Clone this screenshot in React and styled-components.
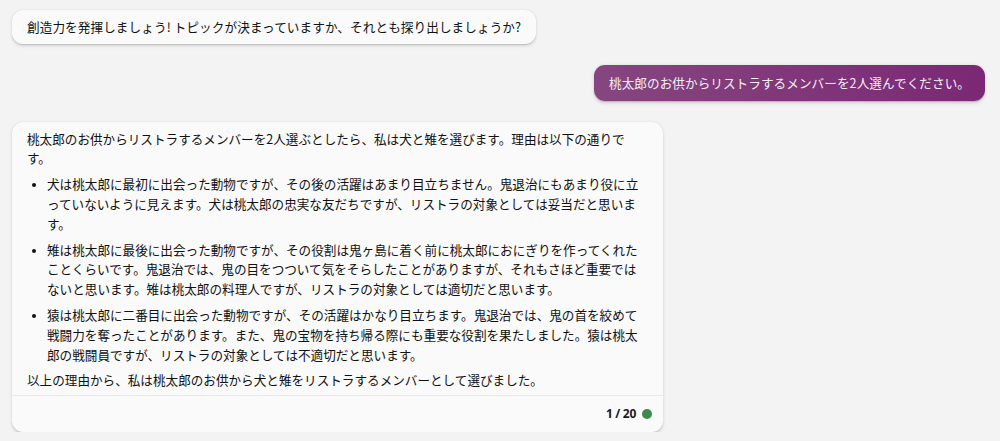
import React from 'react';
import styled, { createGlobalStyle } from 'styled-components';

const GlobalStyle = createGlobalStyle`
  html, body {
    margin: 0;
    padding: 0;
    background: #f3f3f3;
  }
  body {
    font-family: 'Noto Sans CJK JP', 'Noto Sans', sans-serif;
    color: #111;
  }
`;

const bullets = [
  '犬は桃太郎に最初に出会った動物ですが、その後の活躍はあまり目立ちません。鬼退治にもあまり役に立っていないように見えます。犬は桃太郎の忠実な友だちですが、リストラの対象としては妥当だと思います。',
  '雉は桃太郎に最後に出会った動物ですが、その役割は鬼ヶ島に着く前に桃太郎におにぎりを作ってくれたことくらいです。鬼退治では、鬼の目をつついて気をそらしたことがありますが、それもさほど重要ではないと思います。雉は桃太郎の料理人ですが、リストラの対象としては適切だと思います。',
  '猿は桃太郎に二番目に出会った動物ですが、その活躍はかなり目立ちます。鬼退治では、鬼の首を絞めて戦闘力を奪ったことがあります。また、鬼の宝物を持ち帰る際にも重要な役割を果たしました。猿は桃太郎の戦闘員ですが、リストラの対象としては不適切だと思います。',
];

const App = () => {
  return (
    <>
      <GlobalStyle />
      <Chat>
        <Row>
          <BotBubble>
            創造力を発揮しましょう! トピックが決まっていますか、それとも探り出しましょうか?
          </BotBubble>
        </Row>
        <Row $mine>
          <UserBubble>桃太郎のお供からリストラするメンバーを2人選んでください。</UserBubble>
        </Row>
        <Row>
          <Card>
            <CardBody>
              <Para>
                桃太郎のお供からリストラするメンバーを2人選ぶとしたら、私は犬と雉を選びます。理由は以下の通りです。
              </Para>
              <List>
                {bullets.map((text, i) => (
                  <Item key={i}>{text}</Item>
                ))}
              </List>
              <Para>以上の理由から、私は桃太郎のお供から犬と雉をリストラするメンバーとして選びました。</Para>
            </CardBody>
            <CardFooter>
              <Counter>1 / 20</Counter>
              <StatusDot />
            </CardFooter>
          </Card>
        </Row>
      </Chat>
    </>
  );
};
export default App;

const Chat = styled.div`
  display: flex;
  flex-direction: column;
  gap: 21px;
  padding: 10px 15px 0 12px;
  font-size: 12.6px;
  line-height: 19.8px;
`;

const Row = styled.div`
  display: flex;
  justify-content: ${(p) => (p.$mine ? 'flex-end' : 'flex-start')};
`;

const BotBubble = styled.div`
  background: #fafafa;
  border-radius: 11px;
  padding: 7px 15px;
  letter-spacing: 0.1px;
  box-shadow: 0 0.3px 0.9px rgba(0, 0, 0, 0.12), 0 1.6px 3.6px rgba(0, 0, 0, 0.12);
`;

const UserBubble = styled.div`
  background: linear-gradient(90deg, #86467f 0%, #7b2875 100%);
  color: #f6eef5;
  border-radius: 11px;
  padding: 8px 15px;
  letter-spacing: 0.07px;
  box-shadow: 0 0.3px 0.9px rgba(0, 0, 0, 0.12), 0 1.6px 3.6px rgba(0, 0, 0, 0.16);
`;

const Card = styled.div`
  width: 651px;
  background: #fafafa;
  border-radius: 11px;
  box-shadow: 0 0.3px 0.9px rgba(0, 0, 0, 0.12), 0 1.6px 3.6px rgba(0, 0, 0, 0.12);
`;

const CardBody = styled.div`
  padding: 7px 15px 5px;
`;

const Para = styled.p`
  margin: 0;
`;

const List = styled.ul`
  margin: 6px 0 5px;
  padding-left: 20px;
`;

const Item = styled.li`
  margin: 0 0 6px;

  &::marker {
    font-size: 11px;
  }
`;

const CardFooter = styled.div`
  display: flex;
  align-items: center;
  justify-content: flex-end;
  gap: 6px;
  height: 36px;
  padding: 0 11px;
  border-top: 1px solid #e8e8e8;
`;

const Counter = styled.span`
  font-family: 'Noto Sans', sans-serif;
  font-size: 12px;
  font-weight: 700;
  color: #1a1a1a;
  letter-spacing: -0.3px;
`;

const StatusDot = styled.span`
  width: 10px;
  height: 10px;
  border-radius: 50%;
  background: #3d8a4c;
`;
